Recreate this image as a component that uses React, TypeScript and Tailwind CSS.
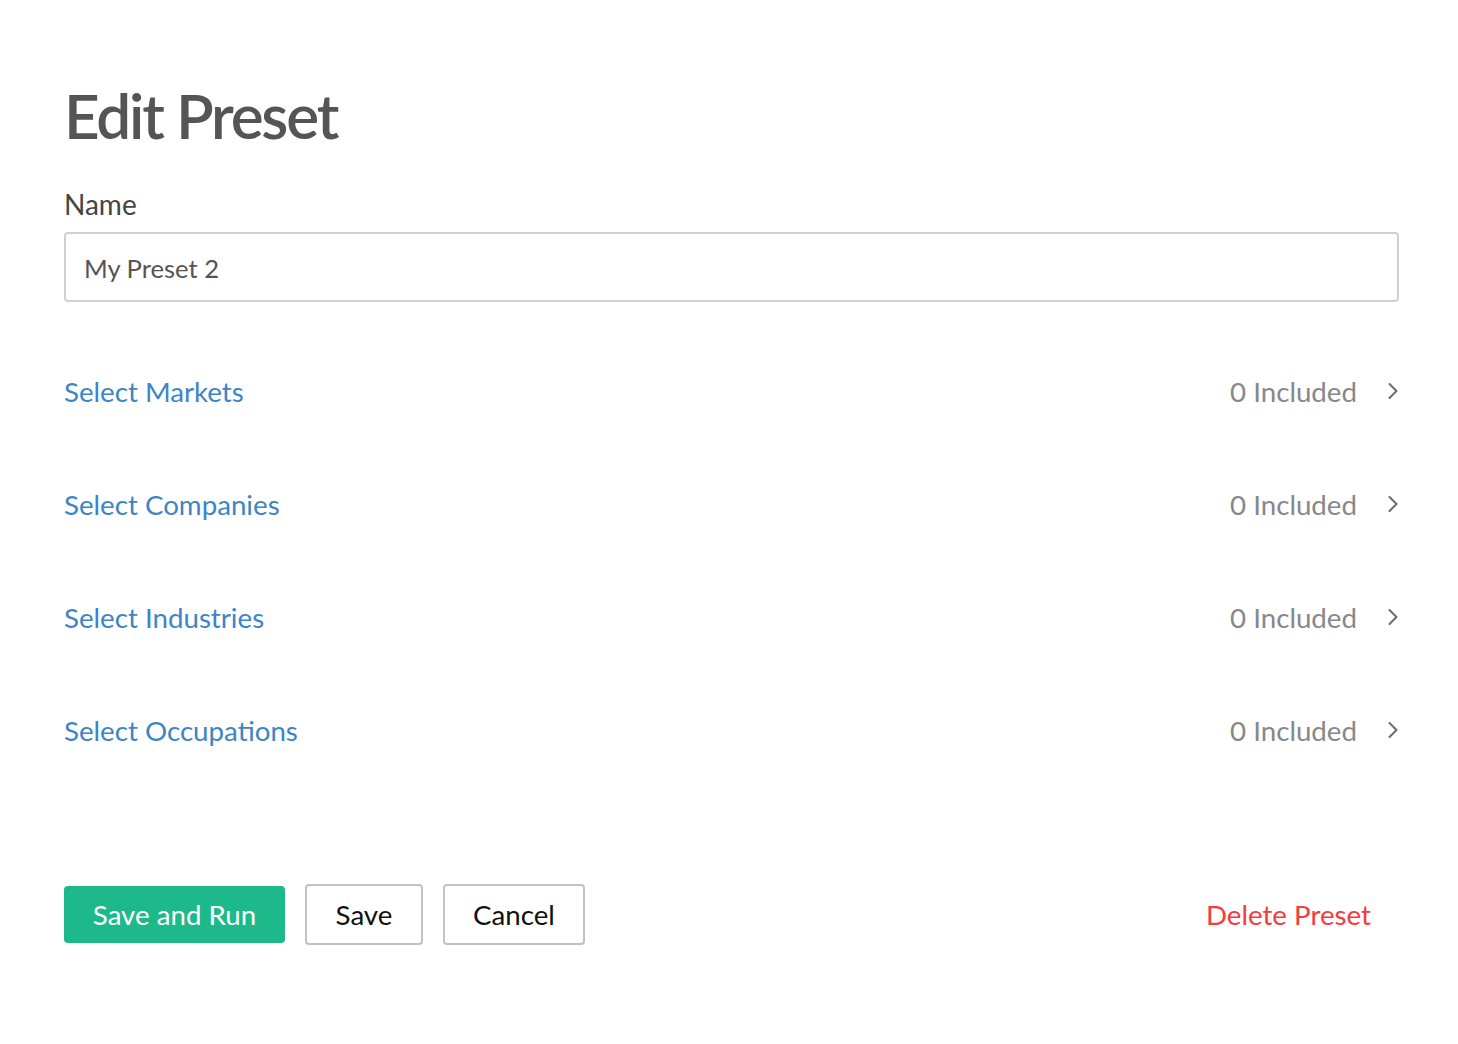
import React from 'react';

const sections = ['Select Markets', 'Select Companies', 'Select Industries', 'Select Occupations'];

function Chevron() {
  return (
    <svg width="12" height="18" viewBox="0 0 12 18" fill="none" className="text-[#6a6a6a]">
      <path d="M2.5 2 L9.5 9 L2.5 16" stroke="currentColor" strokeWidth="2" strokeLinecap="round" strokeLinejoin="round" />
    </svg>
  );
}

export default function App() {
  return (
    <div
      className="w-full min-h-screen bg-white pl-[64px] pr-[59px] pt-[84px]"
      style={{ fontFamily: 'Lato, "Open Sans", sans-serif' }}
    >
      <h1 className="text-[62px] leading-[62px] font-semibold tracking-[-2.2px] text-[#555]">Edit Preset</h1>

      <label className="block mt-[44px] text-[28px] leading-[28px] text-[#444]">Name</label>
      <div className="mt-[14px] h-[70px] rounded-[4px] border-2 border-[#d0d0d0] flex items-center px-[18px]">
        <span className="text-[25.6px] text-[#555] translate-y-[1px]">My Preset 2</span>
      </div>

      {/* ── Filter rows ─────────────────────────── */}
      <div className="mt-[33px] flex flex-col">
        {sections.map(label => (
          <div key={label} className="h-[113px] flex items-center justify-between">
            <span className="text-[27.7px] text-[#3d85c6]">{label}</span>
            <div className="flex items-center gap-[30px]">
              <span className="text-[27.7px] text-[#888]">0 Included</span>
              <Chevron />
            </div>
          </div>
        ))}
      </div>

      {/* ── Actions ─────────────────────────────── */}
      <div className="mt-[97px] flex items-center justify-between">
        <div className="flex items-center gap-[20px]">
          <button className="h-[57px] w-[221px] rounded-[4px] bg-[#1db98a] text-white text-[27.7px]">
            Save and Run
          </button>
          <button className="h-[61px] w-[118px] rounded-[4px] border-2 border-[#c2c2c2] bg-white text-[#111] text-[27.7px]">
            Save
          </button>
          <button className="h-[61px] w-[142px] rounded-[4px] border-2 border-[#c2c2c2] bg-white text-[#111] text-[27.7px]">
            Cancel
          </button>
        </div>
        <button className="mr-[28px] text-[27.7px] text-[#f53b3b]">Delete Preset</button>
      </div>
    </div>
  );
}
